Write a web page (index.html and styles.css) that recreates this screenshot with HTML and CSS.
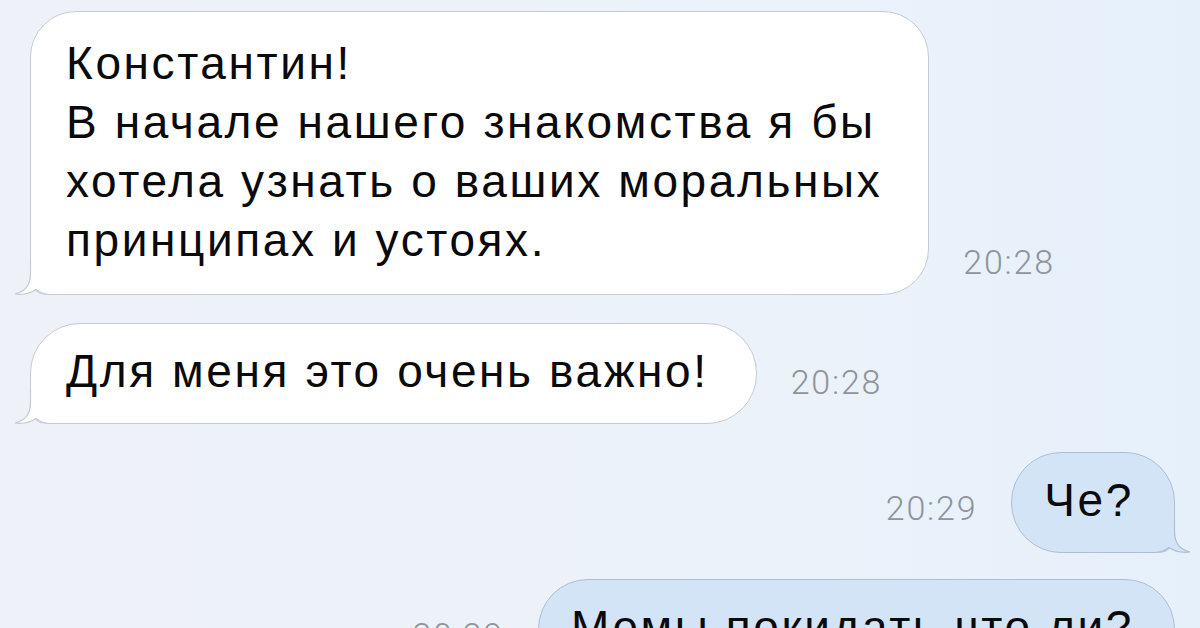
FILE: index.html
```html
<!DOCTYPE html>
<html lang="ru">
<head>
  <meta charset="UTF-8">
  <title>Чат</title>
  <link rel="stylesheet" href="styles.css">
</head>
<body>
  <div class="chat">
    <div class="row in first">
      <div class="bubble long">
        Константин!<br>
        В начале нашего знакомства я бы<br>
        хотела узнать о ваших моральных<br>
        принципах и устоях.
        <svg class="tail" viewBox="0 0 36 34" width="36" height="34">
          <path class="tail-fill" d="M17 0 V12 C17 24 12 30 1 33 C9 34 17 32 22 28.5 C26 31.5 30 34 36 34 V0 Z"/>
          <path class="tail-line" d="M16.5 0 V12 C16.5 24 12 30 1 33 C9 34 17 32 22 28.5 C26 31.5 30 33.5 36 33.5"/>
        </svg>
      </div>
      <span class="time">20:28</span>
    </div>

    <div class="row in">
      <div class="bubble">
        Для меня это очень важно!
        <svg class="tail" viewBox="0 0 36 34" width="36" height="34">
          <path class="tail-fill" d="M17 0 V12 C17 24 12 30 1 33 C9 34 17 32 22 28.5 C26 31.5 30 34 36 34 V0 Z"/>
          <path class="tail-line" d="M16.5 0 V12 C16.5 24 12 30 1 33 C9 34 17 32 22 28.5 C26 31.5 30 33.5 36 33.5"/>
        </svg>
      </div>
      <span class="time">20:28</span>
    </div>

    <div class="row out">
      <span class="time">20:29</span>
      <div class="bubble">
        Че?
        <svg class="tail" viewBox="0 0 36 34" width="36" height="34">
          <path class="tail-fill" d="M17 0 V12 C17 24 12 30 1 33 C9 34 17 32 22 28.5 C26 31.5 30 34 36 34 V0 Z"/>
          <path class="tail-line" d="M16.5 0 V12 C16.5 24 12 30 1 33 C9 34 17 32 22 28.5 C26 31.5 30 33.5 36 33.5"/>
        </svg>
      </div>
    </div>

    <div class="row out last">
      <span class="time">20:29</span>
      <div class="bubble">Мемы покидать что ли?</div>
    </div>
  </div>
</body>
</html>
```

FILE: styles.css
```css
html, body {
  margin: 0;
  padding: 0;
  height: 628px;
  overflow: hidden;
}
body {
  background: linear-gradient(90deg, #eef2f8 0%, #ecf2f9 60%, #e6f0fb 100%);
  font-family: 'Liberation Sans', Arial, sans-serif;
  color: #0a0a0a;
}
.chat {
  display: flex;
  flex-direction: column;
  gap: 28px;
  padding: 11px 25px 0 30px;
}
.row {
  display: flex;
  align-items: center;
  gap: 34px;
}
.row.out {
  justify-content: flex-end;
}
.row.first {
  align-items: flex-end;
}
.row.last {
  margin-top: -2px;
}
.bubble {
  position: relative;
  border: 1px solid #c6cbd2;
  background: #fff;
  border-radius: 50px;
  padding: 18px 47px 22px 35px;
  font-size: 46px;
  letter-spacing: 2.6px;
  line-height: 59px;
  white-space: nowrap;
}
.bubble.long {
  border-radius: 46px;
  padding: 22px 46px 24px 35px;
}
.in .bubble {
  border-bottom-left-radius: 16px;
}
.out .bubble {
  background: #d3e4f7;
  border-color: #adbfd2;
  border-bottom-right-radius: 16px;
  padding-left: 32px;
  padding-right: 40px;
}
.tail {
  position: absolute;
  bottom: -1px;
  left: -17px;
  overflow: visible;
}
.out .tail {
  left: auto;
  right: -17px;
  transform: scaleX(-1);
}
.tail-fill {
  fill: #fff;
}
.out .tail-fill {
  fill: #d3e4f7;
}
.tail-line {
  fill: none;
  stroke: #c6cbd2;
  stroke-width: 1.2;
}
.out .tail-line {
  stroke: #adbfd2;
}
.time {
  font-family: Roboto, 'Liberation Sans', sans-serif;
  font-weight: 300;
  font-size: 34px;
  letter-spacing: 1.8px;
  line-height: 34px;
  color: #8d949c;
  padding-top: 16px;
}
.first .time {
  padding-top: 0;
  margin-bottom: 16px;
}
.out .time {
  padding-top: 10px;
}
```
